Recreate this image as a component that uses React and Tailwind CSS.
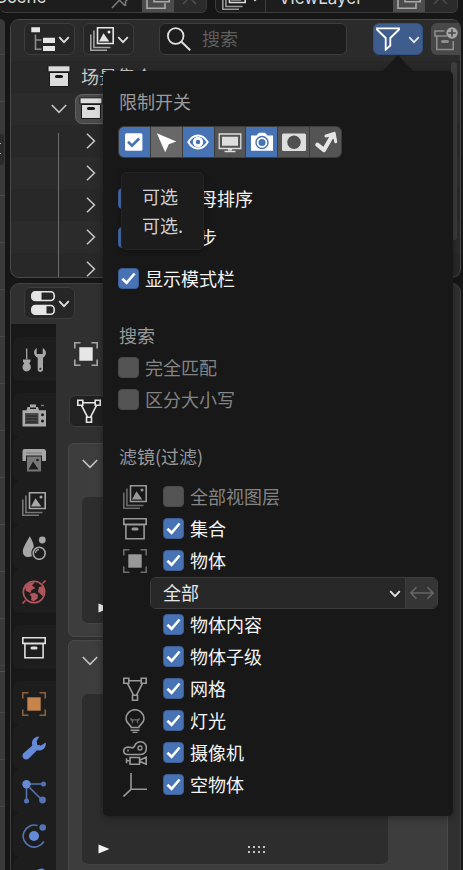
import React from "react";
import clsx from "clsx";

const Icon = ({ className, children, size = 24 }) => (
  <svg
    width={size}
    height={size}
    viewBox="0 0 24 24"
    fill="none"
    stroke="currentColor"
    strokeWidth="1.6"
    className={clsx("shrink-0", className)}
  >
    {children}
  </svg>
);

const ChevronDown = ({ className }) => (
  <svg width="12" height="8" viewBox="0 0 12 8" fill="none" stroke="currentColor" strokeWidth="1.8" className={clsx("shrink-0", className)}>
    <path d="M1.2 1.2 6 6.2l4.8-5" />
  </svg>
);

const ExpandDown = () => (
  <svg width="16" height="10" viewBox="0 0 16 10" fill="none" stroke="#c4c4c4" strokeWidth="1.6" className="shrink-0">
    <path d="m.8 1 7.2 7.4L15.2 1" />
  </svg>
);

const ExpandRight = () => (
  <svg width="10" height="16" viewBox="0 0 10 16" fill="none" stroke="#c4c4c4" strokeWidth="1.6" className="shrink-0">
    <path d="M1 .8 8.4 8 1 15.2" />
  </svg>
);

const OutlinerIcon = () => (
  <Icon className="text-[#e6e6e6]">
    <path d="M4.5 7.5V23M4.5 13h6M4.5 22.3h6" stroke="#8c8c8c" />
    <path d="M.3.3h8.7v5H.3zM12 10.7h12V16H12zM12 19h12v5H12z" fill="currentColor" stroke="none" />
  </Icon>
);

const ViewLayerIcon = ({ className }) => (
  <Icon className={className}>
    <path d="M3.9 3.5v17H20.5M.8 7.5v15.7H17" opacity=".65" />
    <path d="M7.5.8h15.7v15.7H7.5z" />
    <path d="m9 14.5 4.5-8.300 5.8 8.300z" fill="currentColor" stroke="none" />
    <circle cx="19" cy="5" r="1.5" fill="currentColor" stroke="none" />
  </Icon>
);

const CollectionIcon = ({ className }) => (
  <Icon className={className}>
    <path d="M.8 1.8h22.4v5.6H.8zM2.9 7.6h18.2v14.1H2.9z" />
    <rect x="8.5" y="10.5" width="7" height="3" rx="1.5" fill="currentColor" stroke="none" />
  </Icon>
);

const CollectionSolidIcon = () => (
  <Icon className="text-[#dcdcdc]">
    <path d="M1 .8h22v6H1zM2.5 7.5h19V21.500h-19z" fill="currentColor" stroke="#181818" strokeWidth="1" />
    <rect x="8" y="10" width="8" height="3" rx="1.5" fill="#181818" stroke="none" />
  </Icon>
);

const ObjectIcon = ({ className }) => (
  <Icon className={className}>
    <path d="M.8 6.5V.8h5.7M17.5.8h5.7v5.7M23.2 17.5v5.7h-5.7M6.500 23.2H.8v-5.7" opacity=".65" />
    <path d="M5.3 5.3h13.4v13.4H5.3z" fill="currentColor" stroke="none" />
  </Icon>
);

const MeshIcon = ({ className }) => (
  <Icon className={className}>
    <path d="M.8 1.3h5v5h-5zM18.2 1.3h5v5h-5zM9.5 18.2h5v5h-5zM5.8 3.7h12.4M4.5 6.3l6 11.9M19.5 6.3l-6 11.9" />
  </Icon>
);

const LightIcon = ({ className }) => (
  <Icon className={className}>
    <path d="M8.3 18.5C7.5 15.500 3 14.5 3 9.7a9 9 0 0 1 18 0c0 4.8-4.5 5.8-5.300 8.8z" />
    <path d="M8 9v1.800h8V9M9.500 11v3.200M14.500 11v3.200" strokeWidth="1.2" opacity=".7" />
    <path d="M7.5 21.3h9M9.5 23.5h5" />
  </Icon>
);

const MovieCameraIcon = ({ className }) => (
  <Icon className={className}>
    <path d="M4.5 13.500C-.5 13-.5 7 4 6.200c3-.5 4.500 1 6.500.3C12 6 11.500.8 17.500.8c8 0 7.700 12.500.2 12.700z" />
    <circle cx="17" cy="7" r="2" strokeWidth="1.3" />
    <circle cx="5" cy="9.5" r="1" fill="currentColor" stroke="none" />
    <path d="M7 16.500h9.500v6.700H7zM7 19.8H3M3.500 17.3v5M16.500 19.3l6.700-3v7l-6.700-3" />
  </Icon>
);

const EmptyIcon = ({ className }) => (
  <Icon className={className}>
    <path d="M8 0v16.3h16M8 16.3.5 23.5" />
  </Icon>
);

const CheckMark = ({ className }) => (
  <svg width="17" height="17" viewBox="0 0 17 17" fill="none" stroke="currentColor" strokeWidth="2.6" className={className}>
    <path d="m2.4 8.7 4.2 4.1 8-9.3" />
  </svg>
);

const Check = ({ on }) => (
  <span className={clsx("mb-px flex h-[21px] w-[21px] shrink-0 items-center justify-center rounded-[4px] border", on ? "border-[#3c5c94] bg-[#4772b3] text-white" : "border-[#4a4a4a] bg-[#545454]")}>
    {on && <CheckMark />}
  </span>
);

const Heading = ({ children, className }) => (
  <div className={clsx("flex h-8 items-center pb-[3px] pl-4 text-[#9a9a9a]", className)}>{children}</div>
);

const OptionRow = ({ label, on, className }) => (
  <div className={clsx("flex h-8 items-center gap-[6px] pl-[15px]", on ? "text-[#f4f4f4]" : "text-[#848484]", className)}>
    <Check on={on} />
    <span className="-mt-[3px]">{label}</span>
  </div>
);

const FilterRow = ({ icon: RowIcon, label, on = true }) => (
  <div className={clsx("flex h-8 items-center pl-5", on ? "text-[#f4f4f4]" : "text-[#848484]")}>
    <span className="mr-[16px] h-6 w-6 shrink-0">{RowIcon && <RowIcon className="text-[#989898]" />}</span>
    <Check on={on} />
    <span className="-mt-[3px] ml-[6px]">{label}</span>
  </div>
);

const TOGGLES = [
  {
    on: true,
    art: (
      <>
        <rect x="3" y="3.300" width="17.4" height="17.4" rx="1.5" fill="#fff" stroke="none" />
        <path d="m6 11.8 4 3.9 7.200-7.2" stroke="#4772b3" strokeWidth="2.6" />
      </>
    ),
  },
  { on: false, active: true, art: <path d="m2.800 3.2 19.500 8.3-7.5 2.7-3.600 8z" fill="#fff" stroke="none" /> },
  {
    on: true,
    art: (
      <>
        <path d="M2.3 12C7.5 3.3 16.5 3.3 21.7 12 16.5 20.7 7.5 20.7 2.3 12z" stroke="#fff" strokeWidth="2" />
        <circle cx="12" cy="12" r="3.7" stroke="#fff" strokeWidth="3" />
      </>
    ),
  },
  {
    on: false,
    art: (
      <>
        <path d="M1.2 4h21.600v14.5H1.200z" stroke="#dedede" strokeWidth="1.3" />
        <path d="M4 6.7h16v9H4z" fill="#dedede" stroke="none" />
        <path d="M10 19h4v1.5h-4zM6.5 20.8h11v1.5h-11z" fill="#dedede" stroke="none" />
      </>
    ),
  },
  {
    on: true,
    art: (
      <>
        <path d="M1 5.500h5.500L9 2.8h6l2.500 2.7H23v15.2H1z" fill="#fff" stroke="none" />
        <circle cx="12" cy="12.5" r="6" stroke="#4772b3" strokeWidth="1.4" />
        <circle cx="12" cy="12.5" r="3.5" fill="#4772b3" stroke="none" />
      </>
    ),
  },
  {
    on: false,
    art: (
      <>
        <rect x="0" y="3.5" width="24" height="17.5" rx="1.5" fill="#dedede" stroke="none" />
        <circle cx="12" cy="12.2" r="6.7" fill="#505050" stroke="none" />
      </>
    ),
  },
  {
    on: false,
    art: (
      <>
        <path d="m3.300 14.700 6.700 5.300 8-14" stroke="#e6e6e6" strokeWidth="4.200" strokeLinecap="round" strokeLinejoin="round" />
        <path d="m12 6 8.200-2.700 1.500 8.500" stroke="#e6e6e6" strokeWidth="3" strokeLinecap="round" strokeLinejoin="round" />
        <path d="m13.500 6 6.500-2 1 6z" fill="#e6e6e6" stroke="none" />
      </>
    ),
  },
];

const FILTERS_TOP = [
  { icon: ViewLayerIcon, label: "全部视图层", on: false },
  { icon: CollectionIcon, label: "集合" },
  { icon: ObjectIcon, label: "物体" },
];

const FILTERS_BOTTOM = [
  { label: "物体内容" },
  { label: "物体子级" },
  { icon: MeshIcon, label: "网格" },
  { icon: LightIcon, label: "灯光" },
  { icon: MovieCameraIcon, label: "摄像机" },
  { icon: EmptyIcon, label: "空物体" },
];

const FilterPopover = () => (
  <div className="absolute left-[103px] top-[71px] h-[745px] w-[350px] rounded-[5px] bg-[#181818] shadow-[0_2px_7px_rgba(0,0,0,0.35)]">
    <svg width="32" height="17" viewBox="0 0 32 17" className="absolute -top-4 left-[279px]">
      <path d="M0 17 16 0l16 17z" fill="#181818" />
    </svg>

    <div className="flex flex-col pt-[15px]">
      <Heading>限制开关</Heading>

      <div className="ml-[15px] mt-2 flex h-8 w-[224px] gap-px overflow-hidden rounded-[6px] border border-[#3c3c3c] bg-[#3c3c3c]">
        {TOGGLES.map((t, i) => (
          <span
            key={i}
            className={clsx(
              "flex flex-1 items-center justify-center",
              t.on ? "bg-[#4772b3]" : t.active ? "bg-[#686868]" : "bg-[#545454]"
            )}
          >
            <Icon>{t.art}</Icon>
          </span>
        ))}
      </div>

      <OptionRow label="按首字母排序" on className="mt-[25px]" />
      <OptionRow label="选择同步" on className="mt-[7px]" />
      <OptionRow label="显示模式栏" on className="mt-[9px]" />

      <Heading className="mt-[25px]">搜索</Heading>
      <OptionRow label="完全匹配" />
      <OptionRow label="区分大小写" />

      <Heading className="mt-[25px]">滤镜(过滤)</Heading>
      <div className="mt-2">
        {FILTERS_TOP.map((f) => (
          <FilterRow key={f.label} {...f} />
        ))}
        <div className="ml-[47px] flex h-8 w-[288px] overflow-hidden rounded-[6px] border border-[#3d3d3d] text-[#e6e6e6]">
          <div className="flex flex-1 items-center justify-between bg-[#282828] pl-3 pr-1">
            <span className="-mt-[3px]">全部</span>
            <ChevronDown className="mt-[2px]" />
          </div>
          <div className="flex w-8 items-center justify-center border-l border-[#3d3d3d] bg-[#353535] text-[#666]">
            <Icon>
              <path d="M1 12h22M6.5 6.3.9 12l5.6 5.7M17.5 6.3l5.6 5.7-5.6 5.7" />
            </Icon>
          </div>
        </div>
        {FILTERS_BOTTOM.map((f) => (
          <FilterRow key={f.label} {...f} />
        ))}
      </div>
    </div>

    {/* tooltip */}
    <div className="absolute left-[18px] top-[101px] h-[78px] w-[83px] rounded-[5px] border border-[#242424] bg-[#1c1c1c] pl-5 pt-[9px] leading-[29px] text-[#cfcfcf] shadow-[0_1px_4px_rgba(0,0,0,0.4)]">
      <div>可选</div>
      <div>可选.</div>
    </div>
  </div>
);

const DuplicateIcon = () => (
  <Icon className="-mt-[15px] text-[#aaa]">
    <path d="M8 .8h15.2v16H8zM1 6v17.2h18v-5" />
  </Icon>
);

const CloseIcon = () => (
  <Icon className="-mt-[14px] text-[#4d4d4d]">
    <path d="m5 5 13 13M18 5 5 18" />
  </Icon>
);

/* top bar, only its lower edge is on screen */
const TopBar = () => (
  <div className="flex h-[13px] shrink-0 overflow-hidden text-[17px] text-[#dcdcdc]">
    <div className="flex w-[207px] overflow-hidden rounded-b-[6px] border-b border-r border-[#3d3d3d] bg-[#1d1d1d]">
      <div className="flex w-[142px] justify-between">
        <span className="-mt-[15px] ml-[-4px] font-['Inter'] leading-6">Scene</span>
        <Icon className="-mt-[15px] mr-[7px] text-[#777]">
          <path d="m1 23 7.5-8M4.5 11.5l10 9.5M14.500 21v-4.500l8-8" />
        </Icon>
      </div>
      <div className="flex w-8 justify-center bg-[#4c4c4c]">
        <DuplicateIcon />
      </div>
      <div className="flex w-8 justify-center bg-[#2b2b2b]">
        <CloseIcon />
      </div>
    </div>
    <div className="ml-2 flex w-[243px] overflow-hidden rounded-b-[6px] border-x border-b border-[#3d3d3d] bg-[#1d1d1d]">
      <div className="flex w-[50px] border-r border-[#3d3d3d] pl-[6px]">
        <ViewLayerIcon className="-mt-[14px] text-[#dcdcdc]" />
        <ChevronDown className="-mt-[6px] ml-[3px]" />
      </div>
      <span className="-mt-[14px] w-[128px] pl-[13px] font-['Inter'] leading-6">ViewLayer</span>
      <div className="flex w-8 justify-center bg-[#4c4c4c]">
        <DuplicateIcon />
      </div>
      <div className="flex w-8 justify-center bg-[#2b2b2b]">
        <CloseIcon />
      </div>
    </div>
  </div>
);

const MenuButton = ({ children }) => (
  <div className="flex h-8 w-[51px] shrink-0 items-center gap-[3px] rounded-[6px] border border-[#3d3d3d] bg-[#262626] pl-[6px] text-[#e0e0e0]">
    {children}
    <ChevronDown className="mt-[2px]" />
  </div>
);

const Outliner = () => (
  <div className="h-[259px] w-[451px] shrink-0 overflow-hidden rounded-[9px] border border-[#484848] bg-[#282828]">
    <div className="flex h-[41px] w-[460px] items-start bg-[#2b2b2b] pl-[13px] pt-[3px]">
      <MenuButton>
        <OutlinerIcon />
      </MenuButton>
      <div className="ml-2 flex">
        <MenuButton>
          <ViewLayerIcon className="text-[#e6e6e6]" />
        </MenuButton>
      </div>
      <div className="ml-[25px] flex h-8 w-[189px] items-center rounded-[6px] border border-[#3d3d3d] bg-[#1d1d1d] pl-[7px] text-[#5e5e5e]">
        <Icon className="text-[#e0e0e0]">
          <circle cx="8.700" cy="9" r="7.800" strokeWidth="1.8" />
          <path d="m14.2 14.5 9 8.7" strokeWidth="2" />
        </Icon>
        <span className="-mt-[3px] ml-[11px]">搜索</span>
      </div>
      <div className="ml-[26px] flex h-8 w-[51px] items-center rounded-[6px] border border-[#34507e] bg-[#3e5c8c] pl-[2px] text-[#e6e6e6]">
        <Icon className="text-white">
          <path d="M1 1.3h22v1.2L14.3 11v7.500L9.7 22.7V11L1 2.5z" strokeWidth="1.8" />
        </Icon>
        <ChevronDown className="ml-[8px] mt-[2px]" />
      </div>
      <div className="ml-2 flex h-8 w-[40px] items-center rounded-[6px] bg-[#484848] pl-[3px] text-[#8d8d8d]">
        <Icon>
          <path d="M10.5 4H1v5h12M2.8 9v13.5h16.4V14" />
          <path d="M8.500 14.5h5" strokeWidth="3" strokeLinecap="round" />
          <circle cx="18" cy="6" r="5.7" fill="#a8a8a8" stroke="none" />
          <path d="M18 2.2v7.6M14.2 6h7.6" stroke="#484848" />
        </Icon>
      </div>
    </div>

    <div className="relative">
      <div className="flex h-8 items-center pl-[36px] text-[#c8c8c8]">
        <CollectionSolidIcon />
        <span className="-mt-[2px] ml-[10px]">场景集合</span>
      </div>
      <div className="flex h-8 items-center bg-[#2b2b2b] pl-[40px]">
        <ExpandDown />
        <span className="ml-2 flex h-[30px] w-20 items-center rounded-[7px] border border-[#636363] bg-[#4a4a4a] pl-[3px]">
          <CollectionSolidIcon />
        </span>
      </div>
      {[0, 1, 2, 3, 4].map((i) => (
        <div key={i} className={clsx("flex h-8 items-center pl-[75px]", i % 2 && "bg-[#2b2b2b]")}>
          <ExpandRight />
        </div>
      ))}
      <div className="absolute left-[47px] top-[72px] h-[150px] w-px bg-[#6c6c6c]" />
      <div className="absolute left-[440px] top-[1px] h-[178px] w-[6px] rounded-[3px] bg-[#3d3d3d]" />
    </div>
  </div>
);

const TAB_GROUPS = [
  [
    {
      color: "text-[#a6a6a6]",
      art: (
        <>
          <path d="M4.7.5v11" strokeWidth="1.3" />
          <path d="M1 11.5h7.5v2.3l-1.3 1.4c3.3 3.5 1.3 8.3-2.500 8.3s-5.8-4.8-2.4-8.3L1 13.8z" fill="currentColor" stroke="none" />
          <path d="M14.7 0v6h6V0c4.3 2.5 4.3 7.500.3 9.8v11.7c0 3.3-5.3 3.3-5.3 0V9.8C11 7.5 11 2.3 14.7 0z" fill="currentColor" stroke="none" />
          <circle cx="18.3" cy="20.8" r="1" fill="#1d1d1d" stroke="none" />
        </>
      ),
    },
  ],
  [
    {
      color: "text-[#aaaaaa]",
      art: (
        <>
          <path d="M.5 6.3h4L5.5 3H8V.5h6V3h2l1 3.3h7V22.5H.5z" fill="currentColor" stroke="none" />
          <path d="M3 9h13.5v11H3z" fill="#4b4b4b" stroke="none" />
          <path d="M4 12h11.5M4 15h11.5M4 18h11.5" stroke="#1d1d1d" strokeWidth="1" />
          <circle cx="20.5" cy="10.7" r="1.500" fill="#1d1d1d" stroke="none" />
          <circle cx="20.5" cy="17" r="1.500" fill="#1d1d1d" stroke="none" />
          <path d="M8 4.300h6" stroke="#1d1d1d" />
          <path d="M19 1.5h3" stroke="#777" />
        </>
      ),
    },
    {
      color: "text-[#a6a6a6]",
      art: (
        <>
          <path d="M2.5 1h19C23 1 24 2 24 3.5V13h-4V7.5H4V13H.5V3.5C.5 2 1.3 1 2.5 1z" fill="currentColor" stroke="none" />
          <path d="M5 8.5h14v15H5z" fill="#777" stroke="none" />
          <path d="m6.5 21.5 4.5-8 5.5 8z" fill="#1d1d1d" stroke="none" />
          <circle cx="15.5" cy="12" r="1.3" fill="#1d1d1d" stroke="none" />
          <path d="M4 5h16" stroke="#8a8a8a" />
        </>
      ),
    },
    { color: "text-[#a8a8a8]", component: ViewLayerIcon },
    {
      color: "text-[#a8a8a8]",
      art: (
        <>
          <path d="M7.8.3c2 3.7 4 7.5 4 11-2.5 2.5-3 5.7-1.8 9C5 22.5.8 20 .8 15.5c0-4 4.5-10.500 7-15.2z" fill="currentColor" stroke="none" />
          <circle cx="20.3" cy="4" r="3.4" fill="currentColor" stroke="none" />
          <circle cx="17.2" cy="17.3" r="6" />
          <path d="M13.5 17a3.5 3.5 0 0 1 3.5-3.3" strokeWidth="1.2" />
        </>
      ),
    },
    {
      color: "text-[#b0565b]",
      art: (
        <>
          <circle cx="12" cy="12" r="10.7" />
          <path d="m.5 23.5 3-3M20.5 3.5l3-3" />
          <path d="M3 7.5C5 3.5 9 1.5 13 2.5l-3 2.8 3.3 3L9.5 10l-1 3L4 11zM7.500 14l5-1.200 3.500 2.200-.5 3.500-4 3-2.500-1.500.5-3zM17 7l4.500-1 1 6-1.500 4.500L18.500 14l-2.500-2z" fill="currentColor" stroke="none" />
        </>
      ),
    },
  ],
  [{ color: "text-[#dedede]", component: CollectionIcon }],
  [
    { color: "text-[#c6844d]", component: ObjectIcon },
    {
      color: "text-[#658bd8]",
      art: (
        <path d="M17.3.5 14.7 5l.5 3.8 3.8.7L23.7 6.5c1 5-3.5 9-8.7 7.7l-8.5 8.6c-3.5 2.7-7.7-2-5.3-5.2L10.3 9.5C8.800 4.5 12.500.3 17.300.5z" fill="currentColor" stroke="none" />
      ),
    },
    {
      color: "text-[#5273b5]",
      art: (
        <>
          <path d="M8 4h12M4.5 8v12M7.5 7.5l11 11" />
          <circle cx="4.5" cy="4.3" r="4.2" fill="#658bd8" stroke="none" />
          <circle cx="21.5" cy="4" r="2.5" fill="currentColor" stroke="none" />
          <circle cx="4.5" cy="21" r="2.5" fill="currentColor" stroke="none" />
          <circle cx="20.5" cy="20" r="3.4" fill="currentColor" stroke="none" />
        </>
      ),
    },
    {
      color: "text-[#5273b5]",
      art: (
        <>
          <path d="M15.5 1.6A11 11 0 1 0 21.8 17.5" />
          <circle cx="12" cy="12" r="5" fill="#658bd8" stroke="none" />
          <circle cx="20.7" cy="3.5" r="3.3" fill="currentColor" stroke="none" />
        </>
      ),
    },
    {
      color: "text-[#658bd8]",
      art: <path d="M14 6C15 .8 23 .5 23 5.5S16 9 12 14" strokeWidth="2.6" />,
    },
  ],
];

const PropertyTabs = () => (
  <div className="flex w-[45px] shrink-0 flex-col gap-3 bg-[#181818] pl-[2px] pt-[13px]">
    {TAB_GROUPS.map((group, i) => (
      <div key={i} className="flex flex-col">
        {group.map((tab, j) => {
          const TabIcon = tab.component || Icon;
          return (
            <div key={j} className="flex h-11 items-center rounded-l-[6px] bg-[#1d1d1d] pl-[9px]">
              <TabIcon className={clsx("mt-px", tab.color)}>{tab.art}</TabIcon>
            </div>
          );
        })}
      </div>
    ))}
  </div>
);

const PlayTriangle = () => (
  <svg width="12" height="10" viewBox="0 0 12 10" className="shrink-0">
    <path d="M.5.5 11.5 5 .5 9.5z" fill="#f4f4f4" />
  </svg>
);

const Grip = () => (
  <div className="grid grid-cols-4 gap-[3px]">
    {[...Array(8)].map((_, i) => (
      <span key={i} className="h-[2px] w-[2px] bg-[#c4c4c4]" />
    ))}
  </div>
);

const Properties = () => (
  <div className="flex h-[600px] w-[451px] shrink-0 flex-col overflow-hidden rounded-t-[9px] border border-[#404040] bg-[#303030]">
    <div className="flex h-10 shrink-0 items-start pl-[13px] pt-[3px]">
      <MenuButton>
        <Icon className="text-[#e6e6e6]">
          <rect x=".8" y=".8" width="22.4" height="8.7" rx="3.5" />
          <rect x=".8" y="14.5" width="22.4" height="8.7" rx="3.5" />
          <path d="M4 .8h6.5v8.7H4C0 9.5 0 .8 4 .8zM4 14.5h11.5v8.7H4c-4 0-4-8.7 0-8.7z" fill="currentColor" stroke="none" />
        </Icon>
      </MenuButton>
    </div>
    <div className="flex flex-1">
      <PropertyTabs />
      <div className="flex flex-1 flex-col">
        <div className="flex h-[71px] items-start pl-[18px] pt-[18px]">
          <ObjectIcon className="text-[#e6e6e6]" />
        </div>
        <div className="ml-[13px] flex h-8 w-[200px] items-center rounded-[6px] border border-[#3d3d3d] bg-[#212121] pl-[7px]">
          <MeshIcon className="text-[#e6e6e6]" />
        </div>
        <div className="ml-3 mt-4 h-[194px] w-[380px] rounded-[6px] border border-[#484848] bg-[#3d3d3d]">
          <div className="flex h-[53px] items-start pl-[13px] pt-[15px]">
            <ExpandDown />
          </div>
          <div className="ml-[13px] flex h-[127px] w-[306px] items-end rounded-[6px] border-b border-[#444] bg-[#2d2d2d] pb-[10px] pl-4">
            <PlayTriangle />
          </div>
        </div>
        <div className="ml-3 mt-[3px] h-[240px] w-[380px] rounded-[6px] border border-[#484848] bg-[#3d3d3d]">
          <div className="flex h-[53px] items-start pl-[13px] pt-[15px]">
            <ExpandDown />
          </div>
          <div className="ml-[13px] flex h-[171px] w-[306px] items-end rounded-[6px] border-b border-[#444] bg-[#2d2d2d] pb-[10px] pl-4">
            <PlayTriangle />
            <div className="mb-[1px] ml-[138px]">
              <Grip />
            </div>
          </div>
        </div>
      </div>
    </div>
  </div>
);

/* right edge of the 3D viewport */
const ViewportEdge = () => (
  <div className="relative mr-[5px] w-[5px] shrink-0 overflow-hidden rounded-tr-[5px] bg-[#3a3a3a]">
    <div className="flex flex-col gap-[46px] pt-[35px]">
      {[...Array(17)].map((_, i) => (
        <span key={i} className="h-px shrink-0 bg-[#474747]" />
      ))}
    </div>
    <div className="absolute left-0 top-[115px] h-[31px] w-[4px] rounded-r-[3px] bg-[#2b2b2b]">
      <div className="mt-[9px] h-px w-px bg-[#bbb]" />
      <div className="mt-[9px] h-px w-px bg-[#bbb]" />
    </div>
    <div className="absolute left-0 top-[652px] h-px w-full bg-[#93373f]" />
  </div>
);

export default function App() {
  return (
    <div className="relative flex h-[870px] w-[463px] flex-col overflow-hidden bg-[#161616] font-['Noto_Sans_CJK_SC',sans-serif] text-[18px] leading-none whitespace-nowrap">
      <TopBar />
      <div className="mt-[6px] flex h-[851px] shrink-0 overflow-hidden">
        <ViewportEdge />
        <div className="flex flex-col gap-[5px]">
          <Outliner />
          <Properties />
        </div>
      </div>
      <FilterPopover />
    </div>
  );
}
